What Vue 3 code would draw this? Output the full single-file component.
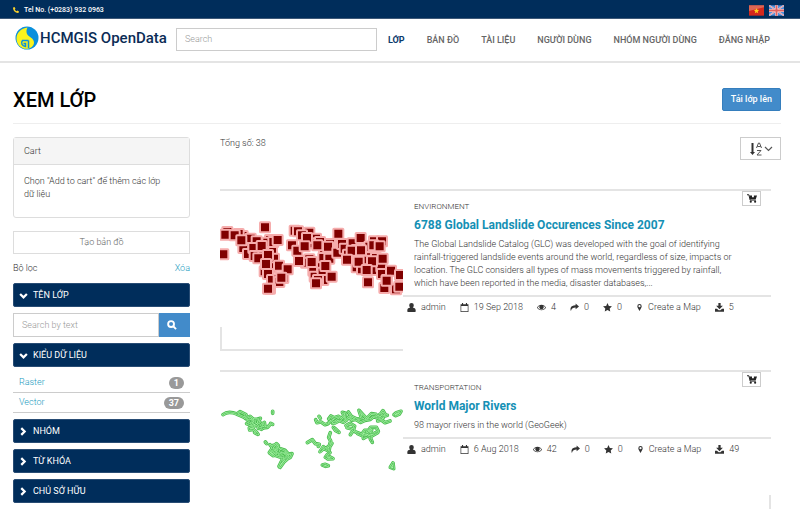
<script setup>
import { ref } from 'vue'

const query = ref('')
const nameFilter = ref('')

const menu = ['LỚP', 'BẢN ĐỒ', 'TÀI LIỆU', 'NGƯỜI DÙNG', 'NHÓM NGƯỜI DÙNG', 'ĐĂNG NHẬP']

const types = [
  { name: 'Raster', count: 1 },
  { name: 'Vector', count: 37 },
]

const closedGroups = ['NHÓM', 'TỪ KHÓA', 'CHỦ SỞ HỮU']

const icons = {
  user: 'M8 0a4 4 0 0 1 4 4.300c0 1.700-.7 3-1.700 3.900C14 8.700 15.500 10.800 15.500 14c0 1-.7 1.800-1.600 1.800H2.100C1.200 15.800.5 15 .5 14c0-3.200 1.500-5.300 5.200-5.800C4.700 7.300 4 6 4 4.300A4 4 0 0 1 8 0z',
  calendar: 'M3.500 0h2v2h5V0h2v2H15v14H1V2h2.500zM2.200 5.500v9.200h11.600V5.500z',
  eye: 'M8 3c3.600 0 6.300 2 8 5-1.700 3-4.400 5-8 5s-6.300-2-8-5c1.700-3 4.400-5 8-5zM4.600 4.900C3.300 5.600 2.200 6.700 1.400 8c1.500 2.300 3.800 3.900 6.600 3.900s5.100-1.600 6.600-3.900c-.8-1.300-1.900-2.400-3.200-3.100a4 4 0 1 1-6.800 0z',
  share: 'M10 1l6 5-6 5V8C5.500 8 3 9 1.600 14 .2 11 0 4 10 4z',
  star: 'M8 .2l2.400 5 5.500.7-4 3.800 1 5.500L8 12.600l-4.900 2.600 1-5.500-4-3.800 5.500-.7z',
  pin: 'M8 0a5 5 0 0 1 5 5c0 2-1 3.500-1.800 5L8 16l-3.200-6C4 8.500 3 7 3 5a5 5 0 0 1 5-5zm0 2.500a2.500 2.500 0 1 0 0 5 2.500 2.500 0 0 0 0-5z',
  download: 'M6 0h4v5h4l-6 6-6-6h4zM0 10h3.500l3 3h3l3-3H16v5.500H0z',
}

const layers = [
  {
    category: 'ENVIRONMENT',
    title: '6788 Global Landslide Occurences Since 2007',
    text: 'The Global Landslide Catalog (GLC) was developed with the goal of identifying rainfall-triggered landslide events around the world, regardless of size, impacts or location. The GLC considers all types of mass movements triggered by rainfall, which have been reported in the media, disaster databases,...',
    kind: 'squares',
    meta: [['user', 'admin'], ['calendar', '19 Sep 2018'], ['eye', '4'], ['share', '0'], ['star', '0'], ['pin', 'Create a Map'], ['download', '5']],
  },
  {
    category: 'TRANSPORTATION',
    title: 'World Major Rivers',
    text: '98 mayor rivers in the world (GeoGeek)',
    kind: 'rivers',
    meta: [['user', 'admin'], ['calendar', '6 Aug 2018'], ['eye', '42'], ['share', '0'], ['star', '0'], ['pin', 'Create a Map'], ['download', '49']],
  },
]

const squares = [
  [52, 156], [98, 168], [86, 162], [122, 176], [140, 184], [100, 204], [114, 222], [130, 204], [134, 228], [180, 180], [172, 188], [190, 186], [186, 216], [192, 236],
  [160, 218], [164, 274], [182, 262], [174, 282], [186, 300], [206, 298], [220, 294], [208, 306], [180, 326],
  [254, 152], [264, 154], [298, 158], [276, 166], [318, 176], [246, 196], [262, 212], [304, 190], [330, 186], [342, 206], [360, 192], [354, 200], [298, 238], [288, 248], [310, 272], [314, 290],
  [340, 234], [358, 236], [336, 262], [338, 278], [340, 300], [324, 300],
  [382, 218], [396, 192], [404, 206], [414, 224], [428, 190], [452, 174], [440, 210], [434, 238], [456, 226], [480, 232], [470, 242], [440, 262], [456, 268], [488, 270], [492, 184], [516, 184], [478, 200], [514, 260], [516, 282], [498, 234], [530, 300], [558, 328],
  [46, 164], [74, 166], [40, 223], [94, 181], [165, 142], [203, 180], [155, 198], [145, 235], [174, 225], [168, 252], [207, 257], [233, 268], [214, 293], [174, 326],
  [291, 174], [284, 199], [322, 196], [267, 243], [305, 246], [346, 258], [365, 290], [318, 310],
  [385, 161], [425, 212], [453, 211], [411, 239], [446, 245], [486, 244], [470, 270], [490, 196], [509, 199], [518, 236], [543, 272], [570, 285], [474, 307], [523, 324], [530, 302], [568, 320],
]

const rivers = [
  'M39 164C50 155 68 157 81 162L90 155 108 164 104 173 91 167 80 162',
  'M106 175L120 169 128 176 118 188 110 191 124 195 135 190 132 178 141 178 151 175 144 187 156 193 163 187 165 199 154 208 145 202 139 192 132 200 118 204 119 210 130 208 139 216 144 223 134 218',
  'M112 180L128 185 142 196 M150 187L157 202 M121 181L119 195 M145 205L172 202 179 195',
  'M182 190L188 193 M188 154L188 160 M166 246L170 251',
  'M180 254L188 263 199 251 205 257 197 267 185 268 178 278 190 287 199 280 211 266 225 271 235 282 246 281 241 292 233 296 222 306 210 322 207 319 215 303 220 289 210 291 195 286 187 277 200 272 215 281 223 278',
  'M190 256L185 270 M225 281L235 289 225 300 M205 264L208 286 M213 309L231 289',
  'M317 179L321 188 333 186 345 194 354 191 363 182 375 189 388 182 400 187 410 180 416 171 426 181 438 178 452 187 465 181 481 178 491 170 505 175 514 171 532 166',
  'M356 177L363 168 372 173 386 169 395 176 402 166 397 157 407 160 404 180 M368 190L380 181 M415 156L424 169 440 177 455 175 447 151 459 164 470 176 484 161 498 163 504 173 519 152 526 164 M509 163L519 175',
  'M503 183L514 180 525 188 540 183 M552 164L559 158 573 154 568 162 557 167z',
  'M408 197L420 190 434 198 430 211 421 224 M411 203L424 206 437 216 455 223 464 211 476 210 482 202 499 202 505 214 491 221 480 220 470 229 460 235 463 222 475 220 485 210 M480 230L487 247 481 237 M443 221L461 229 483 229 503 218 M471 213L483 227',
  'M370 202L377 212 387 217 377 207z M292 248L307 239 316 251 328 253 325 259 M327 169L331 175',
  'M361 218L356 232 362 243 358 257 347 266 340 260 330 275 341 266 354 272 360 278 351 285 346 292 358 290 369 296 354 297 347 291 M366 250L359 261 356 280',
  'M337 315L346 313 355 317 347 319z M541 322L549 309 551 326z',
]
</script>

<template>
  <div class="page">
    <div class="topbar">
      <span class="phone">
        <svg viewBox="0 0 16 16" class="phone-icon" aria-hidden="true"><path d="M4 0L6.500 4.500 4.800 6.500C5.800 8.600 7.400 10.200 9.500 11.200L11.500 9.500 16 12C16 14.500 14.500 16 12.500 16 6 15.500.5 10 0 3.500 0 1.500 1.500 0 4 0z" /></svg>
        Tel No. (+0283) 932 0963
      </span>
      <span class="flags">
        <svg viewBox="0 0 16 11" class="flag" role="img" aria-label="Tiếng Việt">
          <rect width="16" height="11" fill="#d5281c" /><path d="M0 0h16v2L0 6z" fill="#e0806c" opacity=".7" />
          <path d="M8 3l.8 1.800 2 .2-1.500 1.300.5 2L8 7.300l-1.800 1 .5-2L5.200 5l2-.2z" fill="#ffd21a" />
        </svg>
        <svg viewBox="0 0 16 11" class="flag" role="img" aria-label="English">
          <rect width="16" height="11" fill="#4f90dc" />
          <path d="M0 0l16 11M16 0L0 11" stroke="#f1dde2" stroke-width="1.600" /><path d="M0 0l16 11M16 0L0 11" stroke="#e0606a" stroke-width=".6" />
          <path d="M8 0v11M0 5.500h16" stroke="#fbe9e9" stroke-width="3" /><path d="M8 0v11M0 5.500h16" stroke="#e0605f" stroke-width="2" />
        </svg>
      </span>
    </div>

    <header class="header">
      <a href="#" class="brand">
        <svg viewBox="0 0 24 24" class="logo" aria-hidden="true">
          <circle cx="12" cy="12" r="11.500" fill="#0a90dc" />
          <path d="M12.500 1.500C6 2 1.500 7 1.500 12.500c0 5.500 3.500 9 8 10.200 5.500.8 9.500-2.200 9.500-6.200 0-4.500-5.500-5.500-7-8.500-1-2.500-.5-4.500.5-6.500z" fill="#fbf31c" />
          <path d="M13.500 14.500H7.500C5.500 17 7 20 10.500 20.500V17.500H8.500M13.500 14.500V22" fill="none" stroke="#0a90dc" stroke-width="1.500" />
        </svg>
        <span>HCMGIS OpenData</span>
      </a>
      <input v-model="query" type="search" class="search" placeholder="Search" aria-label="Search">
      <nav class="menu">
        <a v-for="(m, i) in menu" :key="m" href="#" :class="{ active: i === 0 }">{{ m }}</a>
      </nav>
    </header>

    <main class="main">
      <div class="heading">
        <h1>XEM LỚP</h1>
        <button type="button" class="primary">Tải lớp lên</button>
      </div>

      <div class="columns">
        <aside class="side">
          <section class="cart">
            <h2>Cart</h2>
            <p>Chọn "Add to cart" để thêm các lớp dữ liệu</p>
          </section>
          <button type="button" class="create">Tạo bản đồ</button>
          <div class="filter-title"><span>Bộ lọc</span><a href="#">Xóa</a></div>

          <button type="button" class="group">
            <svg viewBox="0 0 12 12" aria-hidden="true"><path d="M1.500 4L6 8.500 10.500 4" /></svg>TÊN LỚP
          </button>
          <div class="by-text">
            <input v-model="nameFilter" type="text" placeholder="Search by text" aria-label="Search by text">
            <button type="button" aria-label="Search layers">
              <svg viewBox="0 0 16 16" aria-hidden="true"><circle cx="6.500" cy="6.500" r="4.700" /><path d="M10 10l4.500 4.500" /></svg>
            </button>
          </div>

          <button type="button" class="group">
            <svg viewBox="0 0 12 12" aria-hidden="true"><path d="M1.500 4L6 8.500 10.500 4" /></svg>KIỂU DỮ LIỆU
          </button>
          <ul class="types">
            <li v-for="t in types" :key="t.name"><a href="#">{{ t.name }}</a><span class="badge">{{ t.count }}</span></li>
          </ul>

          <button v-for="g in closedGroups" :key="g" type="button" class="group">
            <svg viewBox="0 0 12 12" aria-hidden="true"><path d="M3 1.500L7.500 6 3 10.500" /></svg>{{ g }}
          </button>
        </aside>

        <section class="results">
          <div class="toolbar">
            <span>Tổng số: 38</span>
            <button type="button" class="sort" aria-label="Sort">
              <svg viewBox="0 0 24 14" aria-hidden="true">
                <path d="M3.500 1v10" stroke="#333" stroke-width="2" /><path d="M1 10h5L3.500 13z" fill="#333" />
                <path d="M7.500 6l2-5h1l2 5M8.300 4.500h3.400M8 8.500h4L8 13h4.500" stroke="#555" fill="none" />
                <path d="M16 5l3.500 3.500L23 5" stroke="#555" stroke-width="1.200" fill="none" />
              </svg>
            </button>
          </div>

          <article v-for="l in layers" :key="l.title" class="layer" :class="l.kind">
            <div class="preview">
              <svg v-if="l.kind === 'squares'" viewBox="30 75 549 360" class="thumb" role="img" aria-label="Landslide map">
                <g fill="#800000" stroke="#f6adad" stroke-width="6">
                  <rect v-for="(s, i) in squares" :key="i" :x="s[0] - 15" :y="s[1] - 15" width="30" height="30" rx="2" />
                </g>
              </svg>
              <svg v-else viewBox="30 78 549 360" class="thumb" role="img" aria-label="River map">
                <g fill="none" stroke-linecap="round" stroke-linejoin="round">
                  <path v-for="(r, i) in rivers" :key="'a' + i" :d="r" stroke="#49bb4e" stroke-width="11" />
                  <path v-for="(r, i) in rivers" :key="'b' + i" :d="r" stroke="#a5f5a3" stroke-width="6" />
                  <path v-for="(r, i) in rivers" :key="'c' + i" :d="r" stroke="#3fae48" stroke-width="2" />
                </g>
              </svg>
              <div class="frame"></div>
            </div>
            <div class="body">
              <div class="info">
                <button type="button" class="add" aria-label="Add to cart">
                  <svg viewBox="0 0 16 14" aria-hidden="true">
                    <path d="M0 1h3l2 8.500h9" stroke="#222" stroke-width="1.600" fill="none" /><path d="M4 2h4v3h3V2h5l-2 6H5z" fill="#222" />
                    <circle cx="6" cy="12" r="1.700" fill="#222" /><circle cx="13" cy="12" r="1.700" fill="#222" />
                  </svg>
                </button>
                <div class="category">{{ l.category }}</div>
                <h3><a href="#">{{ l.title }}</a></h3>
                <p>{{ l.text }}</p>
              </div>
              <ul class="meta">
                <li v-for="m in l.meta" :key="m[0]">
                  <svg viewBox="0 0 16 16" :class="m[0]" aria-hidden="true"><path :d="icons[m[0]]" fill-rule="evenodd" /></svg>{{ m[1] }}
                </li>
              </ul>
            </div>
          </article>
        </section>
      </div>
    </main>
  </div>
</template>

<style>
body { margin: 0; background: #fff; }
</style>

<style scoped>
* { box-sizing: border-box; }
.page { font-family: Roboto, "Liberation Sans", sans-serif; font-size: 9px; line-height: 13px; font-weight: 300; color: #333; }
a { color: #1a9bc0; text-decoration: none; }
button, input { font: inherit; color: inherit; margin: 0; }
h1, h2, h3, p, ul { margin: 0; padding: 0; }
ul { list-style: none; }

.topbar { display: flex; justify-content: space-between; align-items: center; height: 19px; padding: 1px 16px 0 13px; background: #002d5b; border-bottom: 1px solid #3d5878; color: #fff; font-size: 7px; font-weight: 500; }
.phone { display: flex; align-items: center; gap: 5px; padding-top: 1px; }
.phone-icon { width: 6px; height: 6px; fill: #f5cf2c; }
.flags { display: flex; gap: 5px; padding-top: 1px; }
.flag { width: 15px; height: 11px; }

.header { display: flex; align-items: center; height: 44px; padding: 0 30px 2px 15px; border-bottom: 2px solid #e4e4e4; }
.brand { display: flex; align-items: center; gap: 1px; padding-bottom: 3px; color: #0b2c56; font-size: 15px; line-height: 20px; font-weight: 500; white-space: nowrap; }
.logo { width: 24px; height: 24px; }
.search { flex: 1; min-width: 80px; height: 23px; margin: 0 11px 0 9px; padding: 0 8px; border: 1px solid #ccc; outline: 0; border-radius: 0; background: #fff; appearance: none; }
.search::placeholder, .by-text input::placeholder { color: #999; opacity: 1; }
.menu { display: flex; gap: 22px; padding-top: 2px; font-weight: 500; white-space: nowrap; }
.menu a { color: #666; }
.menu a.active { color: #0b3a6b; font-weight: 700; }

.main { padding: 0 19px 0 13px; }
.heading { display: flex; justify-content: space-between; align-items: center; height: 61px; padding-top: 13px; border-bottom: 1px solid #eee; }
h1 { font-size: 20px; line-height: 24px; font-weight: 500; color: #000; }
.primary { height: 23px; padding: 0 8px; border: 1px solid #357ebd; border-radius: 2px; background: #428bca; color: #fff; font-weight: 500; }

.columns { display: grid; grid-template-columns: 177px 1fr; column-gap: 30px; padding-top: 13px; }
.side { display: flex; flex-direction: column; min-width: 0; }
.cart { height: 81px; border: 1px solid #ddd; border-radius: 3px; }
.cart h2 { height: 27px; padding: 0 10px; border-bottom: 1px solid #ddd; background: #f5f5f5; font-size: 9px; line-height: 26px; font-weight: 300; }
.cart p { padding: 10px 20px 10px 10px; }
.create { height: 23px; margin-top: 13px; padding: 0; border: 1px solid #ddd; background: #fff; color: #666; }
.filter-title { display: flex; justify-content: space-between; padding: 8px 0; }
.group { display: flex; align-items: center; gap: 5px; height: 24px; margin-bottom: 6px; padding: 0 5px; border: 1px solid #284c74; border-radius: 2px; background: #002d5b; color: #fff; font-weight: 400; text-align: left; }
.group svg { width: 9px; height: 9px; fill: none; stroke: #fff; stroke-width: 3; }
.by-text { display: flex; margin-bottom: 6px; }
.by-text input { flex: 1; min-width: 0; height: 24px; padding: 0 8px; border: 1px solid #ccc; border-radius: 0; outline: 0; }
.by-text button { display: flex; align-items: center; justify-content: center; width: 31px; height: 24px; padding: 0 6px 0 0; border: 1px solid #428bca; background: #428bca; }
.by-text svg { width: 10px; height: 10px; fill: none; stroke: #fff; stroke-width: 3; }
.types { margin-bottom: 6px; }
.types li { display: flex; justify-content: space-between; align-items: center; height: 20px; padding: 0 6px; border-bottom: 1px solid #ccc; }
.badge { padding: 0 5px; border-radius: 6px; background: #999; color: #fff; line-height: 12px; font-weight: 700; }

.results { min-width: 0; }
.toolbar { display: flex; justify-content: space-between; align-items: flex-start; height: 52px; }
.sort { display: flex; align-items: center; justify-content: center; width: 41px; height: 23px; padding: 0; border: 1px solid #ccc; background: #fff; }
.sort svg { width: 24px; height: 14px; }
.layer { display: flex; height: 181px; margin-right: 10px; border-top: 2px solid #e4e4e4; }
.layer.rivers { height: 139px; }
.preview { flex: none; width: 183px; padding-top: 14px; }
.thumb { display: block; width: 100%; height: 120px; }
.frame { height: 24px; margin-top: 2px; border-left: 2px solid #e4e4e4; border-bottom: 2px solid #e4e4e4; }
.rivers .frame { display: none; }
.body { flex: 1; min-width: 0; display: flex; flex-direction: column; }
.rivers .body::after { content: ""; height: 14px; margin-top: auto; border-right: 2px solid #e4e4e4; }
.info { padding: 0 10px 5px 11px; border-bottom: 2px solid #e4e4e4; }
.info p { padding-right: 18px; }
.add { float: right; display: flex; align-items: center; justify-content: center; width: 19px; height: 15px; padding: 0; border: 1px solid #ccc; background: #fff; }
.add svg { width: 10px; height: 9px; }
.category { padding-top: 9px; font-size: 8px; line-height: 13px; }
h3 { margin: 4px 0 5px; font-size: 12px; line-height: 16px; font-weight: 700; }
h3 a { color: #1590b5; }
.meta { display: flex; gap: 14px; padding: 4px 4px 0; white-space: nowrap; }
.meta li { display: flex; align-items: center; gap: 5px; }
.meta svg { width: 9px; height: 9px; fill: #333; }
.meta svg.pin { width: 7px; }
</style>
